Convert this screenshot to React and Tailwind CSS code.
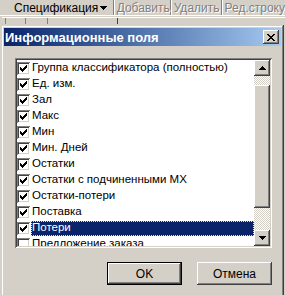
const items = [
  ["Группа классификатора (полностью)", true],
  ["Ед. изм.", true],
  ["Зал", true],
  ["Макс", true],
  ["Мин", true],
  ["Мин. Дней", true],
  ["Остатки", true],
  ["Остатки с подчиненными МХ", true],
  ["Остатки-потери", true],
  ["Поставка", true],
  ["Потери", true, true],
  ["Предложение заказа", false],
];

function Check() {
  return (
    <svg width="13" height="13" viewBox="0 0 13 13" shapeRendering="crispEdges" className="block">
      <path
        fill="#000"
        d="M3 5h1v3h-1z M4 6h1v3h-1z M5 7h1v3h-1z M6 6h1v3h-1z M7 5h1v3h-1z M8 4h1v3h-1z M9 3h1v3h-1z"
      />
    </svg>
  );
}

function CheckBox({ checked }) {
  return (
    <div className="w-[13px] h-[13px] shrink-0 bg-white shadow-[inset_1px_1px_#808080,inset_-1px_-1px_#ffffff,inset_2px_2px_#404040,inset_-2px_-2px_#d4d0c8]">
      {checked && <Check />}
    </div>
  );
}

function Arrow({ down, color = "#000" }) {
  return (
    <svg width="7" height="4" viewBox="0 0 7 4" shapeRendering="crispEdges" className="block">
      {down ? (
        <path fill={color} d="M0 0h7v1h-7z M1 1h5v1h-5z M2 2h3v1h-3z M3 3h1v1h-1z" />
      ) : (
        <path fill={color} d="M3 0h1v1h-1z M2 1h3v1h-3z M1 2h5v1h-5z M0 3h7v1h-7z" />
      )}
    </svg>
  );
}

const raised =
  "shadow-[inset_-1px_-1px_#404040,inset_1px_1px_#ffffff,inset_-2px_-2px_#808080,inset_2px_2px_#d4d0c8]";

const dither =
  "bg-[repeating-conic-gradient(#ffffff_0%_25%,#d4d0c8_0%_50%)] bg-[length:2px_2px]";

const disabled = "text-[#808080] [text-shadow:1px_1px_0_#ffffff]";

export default function App() {
  return (
    <div className="w-[285px] h-[295px] overflow-hidden bg-[#d4d0c8] font-['Liberation_Sans',Arial,sans-serif] text-[12px] text-black leading-none">
      {/* toolbar */}
      <div className="flex h-[16px] border-b border-white">
        <div className="w-[114px] flex items-center border-r border-[#808080]">
          <span className="pl-[14px] flex-1">Спецификация</span>
          <span className="pr-[6px]">
            <Arrow down />
          </span>
        </div>
        <div className={`w-[57px] flex items-center border-l border-white border-r border-r-[#808080] pl-[2px] ${disabled}`}>
          Добавить
        </div>
        <div className={`w-[51px] flex items-center border-l border-white border-r border-r-[#808080] pl-[2px] ${disabled}`}>
          Удалить
        </div>
        <div className={`flex-1 flex items-center border-l border-white pl-[2px] whitespace-nowrap ${disabled}`}>
          Ред.строку
        </div>
      </div>
      {/* background strip */}
      <div className="h-[8px]">
        <div className="ml-[2px] mt-[1px] h-px bg-white" />
        <div className="flex h-[6px]">
          <div className="ml-[5px] w-px bg-[#808080]" />
          <div className="ml-[19px] w-px bg-[#808080]" />
          <div className="ml-[21px] w-px bg-[#808080]" />
          <div className="ml-[69px] w-px bg-[#404040]" />
        </div>
      </div>
      {/* dialog */}
      <div className="ml-[1px] w-[283px] h-[280px] p-[3px] shadow-[inset_-1px_-1px_#404040,inset_1px_1px_#d4d0c8,inset_-2px_-2px_#808080,inset_2px_2px_#ffffff]">
        <div className="h-[18px] flex items-center bg-linear-to-r from-[#0a246a] to-[#a6caf0] pl-[1px] pr-[2px]">
          <span className="flex-1 text-white font-bold text-[13px]">Информационные поля</span>
          <div className={`w-[16px] h-[14px] bg-[#d4d0c8] flex items-center justify-center ${raised}`}>
            <svg width="8" height="7" viewBox="0 0 8 7" shapeRendering="crispEdges" className="block">
              <path
                fill="#000"
                d="M0 0h2v1h-2z M6 0h2v1h-2z M1 1h2v1h-2z M5 1h2v1h-2z M2 2h4v1h-4z M3 3h2v1h-2z M2 4h4v1h-4z M1 5h2v1h-2z M5 5h2v1h-2z M0 6h2v1h-2z M6 6h2v1h-2z"
              />
            </svg>
          </div>
        </div>
        {/* list */}
        <div className="ml-[11px] mt-[12px] w-[257px] h-[190px] bg-white p-[2px] flex shadow-[inset_1px_1px_#808080,inset_-1px_-1px_#ffffff,inset_2px_2px_#404040,inset_-2px_-2px_#d4d0c8]">
          <div className="flex-1 overflow-hidden text-[11.5px]">
            {items.map(([label, checked, sel]) => (
              <div key={label} className="h-[16px] flex items-center">
                <CheckBox checked={checked} />
                <div
                  className={`ml-px h-[15px] flex items-center pl-[1px] pr-[2px] whitespace-nowrap ${
                    sel ? "flex-1 bg-[#0a246a] text-white outline-1 outline-dotted outline-[#ffff00] -outline-offset-1" : ""
                  }`}
                >
                  {label}
                </div>
              </div>
            ))}
          </div>
          <div className="w-[16px] flex flex-col">
            <div className={`h-[16px] bg-[#d4d0c8] flex items-center justify-center ${raised}`}>
              <Arrow />
            </div>
            <div className={`h-[9px] ${dither}`} />
            <div className={`h-[124px] bg-[#d4d0c8] ${raised}`} />
            <div className={`h-[22px] ${dither}`} />
            <div className={`h-[16px] bg-[#d4d0c8] flex items-center justify-center ${raised}`}>
              <Arrow down />
            </div>
          </div>
        </div>
        {/* buttons */}
        <div className="ml-[11px] w-[257px] mt-[14px] flex justify-end gap-[15px]">
          <div className="w-[75px] h-[23px] border border-black">
            <div className={`w-full h-full flex items-center justify-center ${raised}`}>OK</div>
          </div>
          <div className={`w-[75px] h-[23px] flex items-center justify-center ${raised}`}>Отмена</div>
        </div>
      </div>
    </div>
  );
}
